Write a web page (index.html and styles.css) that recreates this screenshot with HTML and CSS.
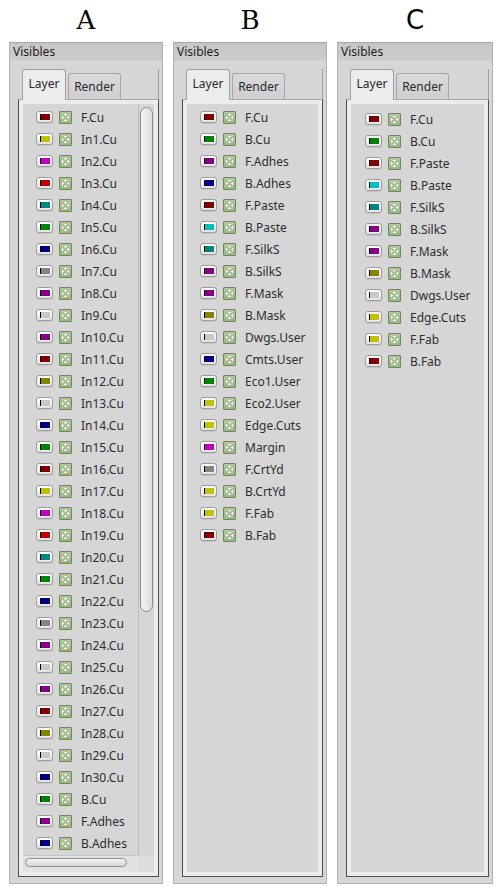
FILE: index.html
```html
<!DOCTYPE html>
<html lang="en">
<head>
<meta charset="utf-8">
<title>Visibles panels</title>
<link rel="stylesheet" href="styles.css">
</head>
<body>
<main class="board">

  <div class="col col-a">
    <div class="label serif">A</div>
    <section class="panel">
      <div class="panel-title">Visibles</div>
      <div class="panel-body">
        <div class="tabs">
          <div class="tab active">Layer</div>
          <div class="tab">Render</div>
        </div>
        <div class="pane">
          <div class="scroll-area">
            <ul class="layers">
              <li class="layer"><span class="sw"><i class="c-dr"></i></span><span class="chk"></span><span class="name">F.Cu</span></li>
              <li class="layer"><span class="sw"><i class="c-ye"></i></span><span class="chk"></span><span class="name">In1.Cu</span></li>
              <li class="layer"><span class="sw"><i class="c-ma"></i></span><span class="chk"></span><span class="name">In2.Cu</span></li>
              <li class="layer"><span class="sw"><i class="c-re"></i></span><span class="chk"></span><span class="name">In3.Cu</span></li>
              <li class="layer"><span class="sw"><i class="c-te"></i></span><span class="chk"></span><span class="name">In4.Cu</span></li>
              <li class="layer"><span class="sw"><i class="c-gr"></i></span><span class="chk"></span><span class="name">In5.Cu</span></li>
              <li class="layer"><span class="sw"><i class="c-bl"></i></span><span class="chk"></span><span class="name">In6.Cu</span></li>
              <li class="layer"><span class="sw"><i class="c-gy"></i></span><span class="chk"></span><span class="name">In7.Cu</span></li>
              <li class="layer"><span class="sw"><i class="c-pu"></i></span><span class="chk"></span><span class="name">In8.Cu</span></li>
              <li class="layer"><span class="sw"><i class="c-lg"></i></span><span class="chk"></span><span class="name">In9.Cu</span></li>
              <li class="layer"><span class="sw"><i class="c-pu"></i></span><span class="chk"></span><span class="name">In10.Cu</span></li>
              <li class="layer"><span class="sw"><i class="c-dr"></i></span><span class="chk"></span><span class="name">In11.Cu</span></li>
              <li class="layer"><span class="sw"><i class="c-ol"></i></span><span class="chk"></span><span class="name">In12.Cu</span></li>
              <li class="layer"><span class="sw"><i class="c-lg"></i></span><span class="chk"></span><span class="name">In13.Cu</span></li>
              <li class="layer"><span class="sw"><i class="c-bl"></i></span><span class="chk"></span><span class="name">In14.Cu</span></li>
              <li class="layer"><span class="sw"><i class="c-gr"></i></span><span class="chk"></span><span class="name">In15.Cu</span></li>
              <li class="layer"><span class="sw"><i class="c-dr"></i></span><span class="chk"></span><span class="name">In16.Cu</span></li>
              <li class="layer"><span class="sw"><i class="c-ye"></i></span><span class="chk"></span><span class="name">In17.Cu</span></li>
              <li class="layer"><span class="sw"><i class="c-ma"></i></span><span class="chk"></span><span class="name">In18.Cu</span></li>
              <li class="layer"><span class="sw"><i class="c-re"></i></span><span class="chk"></span><span class="name">In19.Cu</span></li>
              <li class="layer"><span class="sw"><i class="c-te"></i></span><span class="chk"></span><span class="name">In20.Cu</span></li>
              <li class="layer"><span class="sw"><i class="c-gr"></i></span><span class="chk"></span><span class="name">In21.Cu</span></li>
              <li class="layer"><span class="sw"><i class="c-bl"></i></span><span class="chk"></span><span class="name">In22.Cu</span></li>
              <li class="layer"><span class="sw"><i class="c-gy"></i></span><span class="chk"></span><span class="name">In23.Cu</span></li>
              <li class="layer"><span class="sw"><i class="c-pu"></i></span><span class="chk"></span><span class="name">In24.Cu</span></li>
              <li class="layer"><span class="sw"><i class="c-lg"></i></span><span class="chk"></span><span class="name">In25.Cu</span></li>
              <li class="layer"><span class="sw"><i class="c-pu"></i></span><span class="chk"></span><span class="name">In26.Cu</span></li>
              <li class="layer"><span class="sw"><i class="c-dr"></i></span><span class="chk"></span><span class="name">In27.Cu</span></li>
              <li class="layer"><span class="sw"><i class="c-ol"></i></span><span class="chk"></span><span class="name">In28.Cu</span></li>
              <li class="layer"><span class="sw"><i class="c-lg"></i></span><span class="chk"></span><span class="name">In29.Cu</span></li>
              <li class="layer"><span class="sw"><i class="c-bl"></i></span><span class="chk"></span><span class="name">In30.Cu</span></li>
              <li class="layer"><span class="sw"><i class="c-gr"></i></span><span class="chk"></span><span class="name">B.Cu</span></li>
              <li class="layer"><span class="sw"><i class="c-pu"></i></span><span class="chk"></span><span class="name">F.Adhes</span></li>
              <li class="layer"><span class="sw"><i class="c-bl"></i></span><span class="chk"></span><span class="name">B.Adhes</span></li>
            </ul>
            <div class="vscroll"><div class="vthumb"></div></div>
            <div class="hscroll"><div class="hthumb"></div></div>
            <div class="corner"></div>
          </div>
        </div>
      </div>
    </section>
  </div>

  <div class="col col-b">
    <div class="label serif">B</div>
    <section class="panel">
      <div class="panel-title">Visibles</div>
      <div class="panel-body">
        <div class="tabs">
          <div class="tab active">Layer</div>
          <div class="tab">Render</div>
        </div>
        <div class="pane">
          <ul class="layers plain">
            <li class="layer"><span class="sw"><i class="c-dr"></i></span><span class="chk"></span><span class="name">F.Cu</span></li>
            <li class="layer"><span class="sw"><i class="c-gr"></i></span><span class="chk"></span><span class="name">B.Cu</span></li>
            <li class="layer"><span class="sw"><i class="c-pu"></i></span><span class="chk"></span><span class="name">F.Adhes</span></li>
            <li class="layer"><span class="sw"><i class="c-bl"></i></span><span class="chk"></span><span class="name">B.Adhes</span></li>
            <li class="layer"><span class="sw"><i class="c-dr"></i></span><span class="chk"></span><span class="name">F.Paste</span></li>
            <li class="layer"><span class="sw"><i class="c-cy"></i></span><span class="chk"></span><span class="name">B.Paste</span></li>
            <li class="layer"><span class="sw"><i class="c-te"></i></span><span class="chk"></span><span class="name">F.SilkS</span></li>
            <li class="layer"><span class="sw"><i class="c-pu"></i></span><span class="chk"></span><span class="name">B.SilkS</span></li>
            <li class="layer"><span class="sw"><i class="c-pu"></i></span><span class="chk"></span><span class="name">F.Mask</span></li>
            <li class="layer"><span class="sw"><i class="c-ol"></i></span><span class="chk"></span><span class="name">B.Mask</span></li>
            <li class="layer"><span class="sw"><i class="c-lg"></i></span><span class="chk"></span><span class="name">Dwgs.User</span></li>
            <li class="layer"><span class="sw"><i class="c-bl"></i></span><span class="chk"></span><span class="name">Cmts.User</span></li>
            <li class="layer"><span class="sw"><i class="c-gr"></i></span><span class="chk"></span><span class="name">Eco1.User</span></li>
            <li class="layer"><span class="sw"><i class="c-ye"></i></span><span class="chk"></span><span class="name">Eco2.User</span></li>
            <li class="layer"><span class="sw"><i class="c-ye"></i></span><span class="chk"></span><span class="name">Edge.Cuts</span></li>
            <li class="layer"><span class="sw"><i class="c-ma"></i></span><span class="chk"></span><span class="name">Margin</span></li>
            <li class="layer"><span class="sw"><i class="c-gy"></i></span><span class="chk"></span><span class="name">F.CrtYd</span></li>
            <li class="layer"><span class="sw"><i class="c-ye"></i></span><span class="chk"></span><span class="name">B.CrtYd</span></li>
            <li class="layer"><span class="sw"><i class="c-ye"></i></span><span class="chk"></span><span class="name">F.Fab</span></li>
            <li class="layer"><span class="sw"><i class="c-dr"></i></span><span class="chk"></span><span class="name">B.Fab</span></li>
          </ul>
        </div>
      </div>
    </section>
  </div>

  <div class="col col-c">
    <div class="label sans">C</div>
    <section class="panel">
      <div class="panel-title">Visibles</div>
      <div class="panel-body">
        <div class="tabs">
          <div class="tab active">Layer</div>
          <div class="tab">Render</div>
        </div>
        <div class="pane">
          <ul class="layers plain">
            <li class="layer"><span class="sw"><i class="c-dr"></i></span><span class="chk"></span><span class="name">F.Cu</span></li>
            <li class="layer"><span class="sw"><i class="c-gr"></i></span><span class="chk"></span><span class="name">B.Cu</span></li>
            <li class="layer"><span class="sw"><i class="c-dr"></i></span><span class="chk"></span><span class="name">F.Paste</span></li>
            <li class="layer"><span class="sw"><i class="c-cy"></i></span><span class="chk"></span><span class="name">B.Paste</span></li>
            <li class="layer"><span class="sw"><i class="c-te"></i></span><span class="chk"></span><span class="name">F.SilkS</span></li>
            <li class="layer"><span class="sw"><i class="c-pu"></i></span><span class="chk"></span><span class="name">B.SilkS</span></li>
            <li class="layer"><span class="sw"><i class="c-pu"></i></span><span class="chk"></span><span class="name">F.Mask</span></li>
            <li class="layer"><span class="sw"><i class="c-ol"></i></span><span class="chk"></span><span class="name">B.Mask</span></li>
            <li class="layer"><span class="sw"><i class="c-lg"></i></span><span class="chk"></span><span class="name">Dwgs.User</span></li>
            <li class="layer"><span class="sw"><i class="c-ye"></i></span><span class="chk"></span><span class="name">Edge.Cuts</span></li>
            <li class="layer"><span class="sw"><i class="c-ye"></i></span><span class="chk"></span><span class="name">F.Fab</span></li>
            <li class="layer"><span class="sw"><i class="c-dr"></i></span><span class="chk"></span><span class="name">B.Fab</span></li>
          </ul>
        </div>
      </div>
    </section>
  </div>

</main>
</body>
</html>
```

FILE: styles.css
```css
* { box-sizing: border-box; }

html, body {
  margin: 0;
  padding: 0;
  background: #ffffff;
}

body {
  width: 500px;
  height: 891px;
  overflow: hidden;
  font-family: "Noto Sans", "DejaVu Sans", sans-serif;
}

.board {
  display: flex;
  gap: 10px;
  padding-left: 9px;
}

.col {
  display: flex;
  flex-direction: column;
}
.col-a, .col-b { width: 154px; }
.col-c { width: 156px; }

.label {
  height: 42px;
  line-height: 40px;
  text-align: center;
  font-size: 26px;
  color: #000;
}
.label.serif { font-family: "DejaVu Serif", serif; }
.label.sans { font-family: "DejaVu Sans", sans-serif; }

.panel {
  height: 842px;
  display: flex;
  flex-direction: column;
  background: #d6d6d6;
  border: 1px solid #b0b0b0;
  border-top-color: #a6a6a6;
}

.panel-title {
  height: 18px;
  line-height: 17px;
  padding-left: 3px;
  font-size: 12px;
  color: #1c1c1c;
  background: linear-gradient(#c6c6c6, #cdcdcd);
}

.panel-body {
  flex: 1;
  display: flex;
  flex-direction: column;
  padding: 8px 3px 6px 8px;
  min-height: 0;
}

.tabs {
  height: 30px;
  display: flex;
  align-items: flex-end;
  gap: 2px;
  padding-left: 4px;
  border-right: 1px solid #a2a2a2;
}

.tab {
  height: 26px;
  padding: 0 6px;
  display: flex;
  align-items: center;
  justify-content: center;
  font-size: 12px;
  color: #2a2a2a;
  background: linear-gradient(#dadada, #cfcfcf);
  border: 1px solid #a6a6a6;
  border-bottom: none;
  border-radius: 3px 3px 0 0;
  width: 53px;
}

.tab.active {
  height: 31px;
  width: 44px;
  margin-bottom: -1px;
  padding-bottom: 3px;
  background: #ececec;
  border-color: #a0a0a0;
  position: relative;
  z-index: 1;
}

.pane {
  flex: 1;
  min-height: 0;
  display: flex;
  background: #ececec;
  border: 1px solid #505050;
  border-top-color: #a6a6a6;
  padding: 4px;
}

.scroll-area {
  flex: 1;
  display: grid;
  grid-template-columns: 1fr 15px;
  grid-template-rows: 1fr 16px;
  background: #d6d6d6;
}

.layers {
  list-style: none;
  margin: 0;
  padding: 2px 0 0 13px;
  overflow: hidden;
  background: #d6d6d6;
}
.scroll-area .layers {
  border-right: 1px solid #bcbcbc;
  border-bottom: 1px solid #c6c6c6;
}
.layers.plain { flex: 1; }
.col-c .layers.plain { padding-top: 4px; padding-left: 14px; }

.layer {
  height: 22px;
  display: flex;
  align-items: center;
}

.sw {
  width: 17px;
  height: 12px;
  margin-right: 6px;
  display: flex;
  align-items: center;
  padding-left: 3px;
  border: 1px solid #9c9c9c;
  border-radius: 3px;
  background: linear-gradient(#ffffff, #e4e4e4);
  box-shadow: 0 1px 0 rgba(0,0,0,0.08);
}
.sw i {
  display: block;
  width: 10px;
  height: 6px;
  border-left: 1px solid #000;
}

.chk {
  width: 13px;
  height: 13px;
  margin-right: 9px;
  flex: none;
  display: flex;
  align-items: center;
  justify-content: center;
  border: 1px solid #6b8a56;
  border-radius: 1px;
  background: linear-gradient(#aecb98, #98b97f);
}
.chk::after {
  content: "";
  width: 7px;
  height: 7px;
  background:
    linear-gradient(45deg, transparent 42%, #a9bf98 42%, #a9bf98 58%, transparent 58%),
    linear-gradient(-45deg, transparent 42%, #a9bf98 42%, #a9bf98 58%, transparent 58%),
    #ffffff;
}

.name {
  font-size: 12px;
  color: #2e2e2e;
  white-space: nowrap;
}

.c-dr { background: #840000; }
.c-ye { background: #c2c200; }
.c-ma { background: #c200c2; }
.c-re { background: #c20000; }
.c-te { background: #008484; }
.c-gr { background: #008400; }
.c-bl { background: #000084; }
.c-gy { background: #848484; }
.c-pu { background: #840084; }
.c-lg { background: #c8c8c8; }
.c-ol { background: #848400; }
.c-cy { background: #00c2c2; }

.vscroll {
  padding: 3px 1px 0 1px;
  background: #d6d6d6;
}
.vthumb {
  width: 13px;
  height: 505px;
  border: 1px solid #8c8c8c;
  border-radius: 7px;
  background: linear-gradient(to right, #f4f4f4, #dcdcdc);
}

.hscroll {
  padding: 2px 0 0 2px;
  background: #e2e2e2;
}
.hthumb {
  width: 102px;
  height: 9px;
  border: 1px solid #8e8e8e;
  border-radius: 5px;
  background: linear-gradient(#f2f2f2, #d8d8d8);
}

.corner {
  background: #dcdcdc;
}
```
